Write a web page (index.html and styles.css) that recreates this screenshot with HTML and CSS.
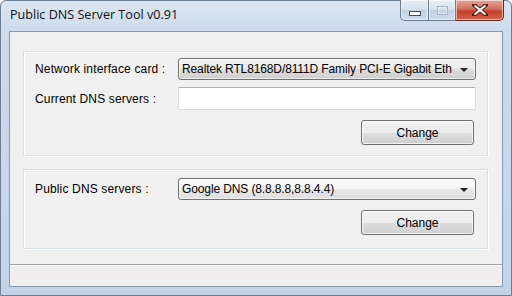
FILE: index.html
```html
<!DOCTYPE html>
<html lang="en">
<head>
    <meta charset="UTF-8">
    <title>Public DNS Server Tool v0.91</title>
    <link rel="stylesheet" href="styles.css">
</head>
<body>
    <div class="window">
        <div class="titlebar">
            <span class="title">Public DNS Server Tool v0.91</span>
            <div class="caption">
                <div class="cap min"><span class="min-bar"></span></div>
                <div class="cap max"><span class="max-box"></span></div>
                <div class="cap close">
                    <svg width="16" height="12" viewBox="0 0 16 12">
                        <path d="M2 1 L14 11 M14 1 L2 11" stroke="#5a1c14" stroke-width="4.2" stroke-linecap="square"/>
                        <path d="M2.5 1.5 L13.5 10.5 M13.5 1.5 L2.5 10.5" stroke="#fff" stroke-width="2.2"/>
                    </svg>
                </div>
            </div>
        </div>
        <div class="client">
            <div class="content">
                <div class="group first">
                    <div class="row">
                        <label>Network interface card :</label>
                        <div class="combo">
                            <span class="value">Realtek RTL8168D/8111D Family PCI-E Gigabit Eth</span>
                            <span class="arrow"></span>
                        </div>
                    </div>
                    <div class="row">
                        <label>Current DNS servers :</label>
                        <div class="textbox"></div>
                    </div>
                    <div class="row buttons">
                        <button>Change</button>
                    </div>
                </div>
                <div class="group second">
                    <div class="row">
                        <label>Public DNS servers :</label>
                        <div class="combo light">
                            <span class="value">Google DNS (8.8.8.8,8.8.4.4)</span>
                            <span class="arrow"></span>
                        </div>
                    </div>
                    <div class="row buttons">
                        <button>Change</button>
                    </div>
                </div>
            </div>
            <div class="statusbar"></div>
        </div>
    </div>
</body>
</html>
```

FILE: styles.css
```css
body {
    margin: 0;
    width: 512px;
    height: 296px;
    overflow: hidden;
    font-family: "Liberation Sans", Arial, sans-serif;
    font-size: 12px;
    color: #000;
    background: #fff;
}
.window {
    box-sizing: border-box;
    width: 512px;
    height: 296px;
    border: 1px solid #6d7f94;
    border-radius: 6px 6px 0 0;
    background: linear-gradient(to bottom, #dbe6f2 0px, #cddbeb 30px, #c3d4e8 100%);
    display: flex;
    flex-direction: column;
}
.titlebar {
    height: 30px;
    display: flex;
    justify-content: space-between;
    align-items: flex-start;
}
.title {
    margin: 5px 0 0 9px;
    font-family: "Open Sans", "Liberation Sans", sans-serif;
    font-size: 12.6px;
    color: #111;
}
.caption {
    display: flex;
    margin-right: 7px;
    margin-top: -1px;
}
.cap {
    height: 20px;
    border: 1px solid #6a7889;
    border-top: none;
    display: flex;
    align-items: center;
    justify-content: center;
    box-shadow: inset 0 0 0 1px rgba(255, 255, 255, 0.55);
}
.min {
    width: 27px;
    border-radius: 0 0 0 5px;
    background: linear-gradient(to bottom, #e7eef6 0%, #d5e0ec 50%, #c2d0e0 51%, #cfdcea 100%);
}
.max {
    width: 26px;
    border-left: none;
    background: linear-gradient(to bottom, #e7eef6 0%, #d5e0ec 50%, #c2d0e0 51%, #cfdcea 100%);
}
.close {
    width: 47px;
    border-left: none;
    border-color: #5d2a22;
    border-radius: 0 0 5px 0;
    background: linear-gradient(to bottom, #e8a598 0%, #d4705f 45%, #c2412c 55%, #d0604a 100%);
}
.min-bar {
    width: 10px;
    height: 3px;
    margin-top: 6px;
    background: #fff;
    border: 1px solid #3f4b5a;
}
.max-box {
    width: 9px;
    height: 7px;
    border: 1px solid #a5b2c2;
    box-shadow: inset 0 0 0 1px #e9eef4;
}
.client {
    margin: 0 8px;
    height: 256px;
    border: 1px solid #8597ac;
    box-sizing: border-box;
    background: #f0f0f0;
    display: flex;
    flex-direction: column;
}
.content {
    flex: 1;
    padding: 19px 14px 0 13px;
}
.group {
    box-sizing: border-box;
    border: 1px solid #d5dfe5;
    box-shadow: inset 1px 1px 0 #fff, 1px 1px 0 #fff;
    padding: 6px 11px 0 11px;
}
.group.first {
    height: 105px;
    margin-bottom: 13px;
}
.group.second {
    height: 80px;
    padding-top: 8px;
}
.row {
    display: flex;
    align-items: center;
    margin-bottom: 7px;
}
.row label {
    width: 143px;
    flex: none;
    letter-spacing: 0.15px;
}
.combo {
    box-sizing: border-box;
    width: 298px;
    height: 22px;
    border: 1px solid #707070;
    border-radius: 3px;
    background: linear-gradient(to bottom, #f2f2f2 0%, #ebebeb 50%, #dddddd 51%, #cfcfcf 100%);
    box-shadow: inset 0 0 0 1px rgba(255, 255, 255, 0.6);
    display: flex;
    align-items: center;
    padding: 0 7px 0 3px;
    white-space: nowrap;
}
.combo.light {
    background: linear-gradient(to bottom, #fafafa 0%, #f3f3f3 50%, #e8e8e8 51%, #dedede 100%);
}
.value {
    flex: 1;
    overflow: hidden;
    letter-spacing: -0.12px;
}
.arrow {
    flex: none;
    width: 0;
    height: 0;
    margin-left: 4px;
    border-left: 4px solid transparent;
    border-right: 4px solid transparent;
    border-top: 4px solid #222;
    margin-top: 1px;
}
.textbox {
    box-sizing: border-box;
    width: 298px;
    height: 23px;
    border: 1px solid #d9dde3;
    border-top-color: #abadb3;
    border-radius: 2px;
    background: #fff;
}
.row.buttons {
    justify-content: flex-end;
    margin-top: 10px;
    padding-right: 2px;
}
button {
    box-sizing: border-box;
    width: 113px;
    height: 25px;
    border: 1px solid #707070;
    border-radius: 3px;
    background: linear-gradient(to bottom, #f2f2f2 0%, #ebebeb 50%, #dddddd 51%, #cfcfcf 100%);
    box-shadow: inset 0 0 0 1px rgba(255, 255, 255, 0.7);
    font-family: "Liberation Sans", Arial, sans-serif;
    font-size: 12px;
    color: #000;
    padding: 0;
}
.statusbar {
    height: 21px;
    border-top: 1px solid #a0a0a0;
    box-shadow: inset 0 1px 0 #fff;
    background: #f0eeee;
}
```
